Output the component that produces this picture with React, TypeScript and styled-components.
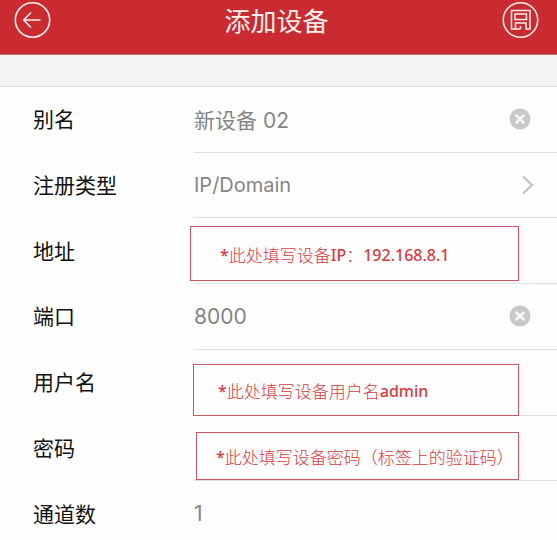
import React, { useState } from "react";
import styled, { createGlobalStyle } from "styled-components";

const GlobalStyle = createGlobalStyle`
  * { box-sizing: border-box; }
  body {
    margin: 0;
    background: #fefefe;
    font-family: Inter, "Noto Sans CJK SC", sans-serif;
  }
  button, input, select { font: inherit; }
`;

const Page = styled.main`
  min-height: 100vh;
`;

const Header = styled.header`
  display: flex;
  align-items: center;
  justify-content: space-between;
  padding: 0 18px 14px 14px;
  background: #c92b30;
  border-bottom: 1px solid #c4757a;
`;

const Title = styled.h1`
  margin: 0;
  padding-top: 4px;
  font-size: 26px;
  line-height: 36px;
  font-weight: 400;
  color: #fff0ed;
`;

const RoundButton = styled.button`
  display: flex;
  padding: 0;
  border: 0;
  background: none;
  color: #fff0ed;
  cursor: pointer;
`;

const Band = styled.div`
  height: 31px;
  background: #f4f4f4;
`;

const Form = styled.form`
  display: grid;
  grid-template-columns: minmax(0, 1fr);
  grid-auto-rows: 1fr;
  min-height: 461px;
  border-top: 1px solid #dcdcdc;
`;

const Row = styled.div`
  display: grid;
  grid-template-columns: 161px minmax(0, 1fr);
  padding-left: 33px;
`;

const Label = styled.label`
  display: flex;
  align-items: center;
  padding-bottom: 3px;
  font-size: 21px;
  color: #111;
`;

const Field = styled.div`
  position: relative;
  display: flex;
  align-items: center;
  border-bottom: 1px solid #dedede;
`;

const TextInput = styled.input`
  flex: 1;
  min-width: 0;
  height: 40px;
  padding: 0;
  border: 0;
  outline: 0;
  background: transparent;
  font-size: 21px;
  color: #858585;
`;

const Select = styled.select`
  flex: 1;
  min-width: 0;
  height: 40px;
  padding: 0;
  border: 0;
  outline: 0;
  appearance: none;
  background: transparent;
  font-size: 20px;
  color: #858585;
`;

const ClearButton = styled.button`
  display: flex;
  margin-right: 26px;
  padding: 0;
  border: 0;
  background: none;
  cursor: pointer;
`;

const Chevron = styled.svg`
  margin-right: 22px;
  pointer-events: none;
`;

const Note = styled.div<{ $left: number; $top: number; $bottom: number; $indent: number }>`
  position: absolute;
  left: ${(p) => p.$left}px;
  right: 38px;
  top: ${(p) => p.$top}px;
  bottom: ${(p) => p.$bottom}px;
  display: flex;
  align-items: center;
  padding-left: ${(p) => p.$indent}px;
  padding-top: 3px;
  border: 1px solid #cf5560;
  background: #fefefe;
  font-family: "Noto Sans CJK SC", sans-serif;
  font-size: 17px;
  font-weight: 300;
  line-height: 24px;
  white-space: pre;
  color: #d93a40;
  pointer-events: none;
`;

const Latin = styled.span`
  font-family: "Noto Sans", sans-serif;
  font-size: 16px;
  font-weight: 500;
`;

const BackIcon = () => (
  <svg width="37" height="36" viewBox="0 0 37 36" fill="none" stroke="currentColor" strokeWidth="1.6" aria-hidden="true">
    <circle cx="18.5" cy="18" r="17.2" />
    <path d="M26.5 18H10M17 10.5L9.7 18L17 25.5" />
  </svg>
);

const SaveIcon = () => (
  <svg width="37" height="36" viewBox="0 0 37 36" fill="none" stroke="currentColor" strokeWidth="1.5" aria-hidden="true">
    <circle cx="18.5" cy="18" r="17.2" />
    <path d="M18.5 27H9.5V8.5H28V27H24V21H13.5V27M18.5 27V24M13 12H24.5V17.5H13Z" />
  </svg>
);

const ClearIcon = () => (
  <svg width="22" height="22" viewBox="0 0 22 22" aria-hidden="true">
    <circle cx="11" cy="11" r="10.5" fill="#c9c9c9" />
    <path d="M6.8 6.8L15.2 15.2M15.2 6.8L6.8 15.2" stroke="#fff" strokeWidth="2.4" />
  </svg>
);

export default function App() {
  const [alias, setAlias] = useState("新设备 02");
  const [port, setPort] = useState("8000");

  return (
    <Page>
      <GlobalStyle />
      <Header>
        <RoundButton type="button" aria-label="返回"><BackIcon /></RoundButton>
        <Title>添加设备</Title>
        <RoundButton type="submit" form="device" aria-label="保存"><SaveIcon /></RoundButton>
      </Header>
      <Band />
      <Form id="device" onSubmit={(e) => e.preventDefault()}>
        <Row>
          <Label htmlFor="alias">别名</Label>
          <Field>
            <TextInput id="alias" value={alias} onChange={(e) => setAlias(e.target.value)} />
            <ClearButton type="button" aria-label="清除别名" onClick={() => setAlias("")}><ClearIcon /></ClearButton>
          </Field>
        </Row>
        <Row>
          <Label htmlFor="type">注册类型</Label>
          <Field>
            <Select id="type" defaultValue="IP/Domain">
              <option>IP/Domain</option>
            </Select>
            <Chevron width="14" height="22" viewBox="0 0 14 22" fill="none" stroke="#c4c4c4" strokeWidth="2.4" aria-hidden="true">
              <path d="M2 2.5L11 11L2 19.5" />
            </Chevron>
          </Field>
        </Row>
        <Row>
          <Label htmlFor="address">地址</Label>
          <Field>
            <TextInput id="address" />
            <Note $left={-4} $top={8} $bottom={2} $indent={29}>
              <Latin>*</Latin>此处填写设备<Latin>IP</Latin>：<Latin>192.168.8.1</Latin>
            </Note>
          </Field>
        </Row>
        <Row>
          <Label htmlFor="port">端口</Label>
          <Field>
            <TextInput id="port" inputMode="numeric" value={port} onChange={(e) => setPort(e.target.value)} />
            <ClearButton type="button" aria-label="清除端口" onClick={() => setPort("")}><ClearIcon /></ClearButton>
          </Field>
        </Row>
        <Row>
          <Label htmlFor="user">用户名</Label>
          <Field>
            <TextInput id="user" />
            <Note $left={-1} $top={14} $bottom={-1} $indent={24}>
              <Latin>*</Latin>此处填写设备用户名<Latin>admin</Latin>
            </Note>
          </Field>
        </Row>
        <Row>
          <Label htmlFor="password">密码</Label>
          <Field>
            <TextInput id="password" type="password" />
            <Note $left={2} $top={16} $bottom={0} $indent={19}>
              <Latin>*</Latin>此处填写设备密码（标签上的验证码）
            </Note>
          </Field>
        </Row>
        <Row>
          <Label htmlFor="channels">通道数</Label>
          <Field>
            <TextInput id="channels" defaultValue="1" readOnly />
          </Field>
        </Row>
      </Form>
    </Page>
  );
}
